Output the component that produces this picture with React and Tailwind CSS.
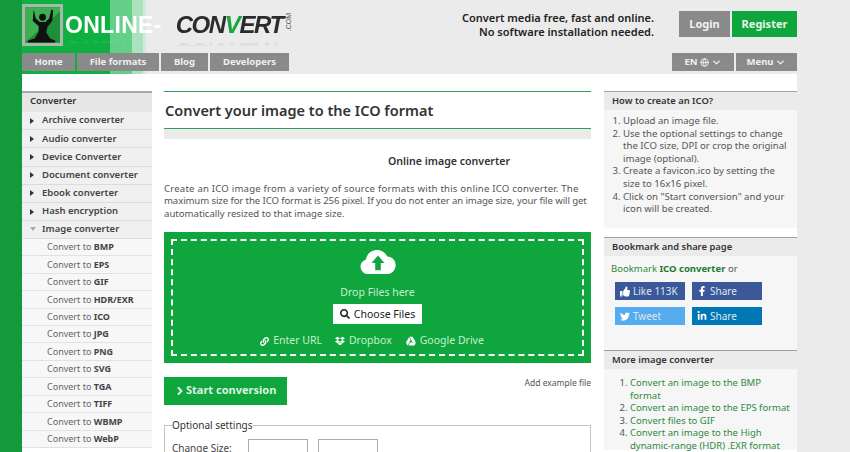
import React from 'react';
import { ChevronDown, ChevronRight, Globe } from 'lucide-react';
import { FaDropbox, FaGoogleDrive, FaFacebookF, FaTwitter, FaLinkedinIn, FaThumbsUp, FaLink, FaSearch } from 'react-icons/fa';

const topConverters = ['Archive converter', 'Audio converter', 'Device Converter', 'Document converter', 'Ebook converter', 'Hash encryption'];
const imageFormats = ['BMP', 'EPS', 'GIF', 'HDR/EXR', 'ICO', 'JPG', 'PNG', 'SVG', 'TGA', 'TIFF', 'WBMP', 'WebP'];

const NavButton = ({ children, className }) => (
  <a className={`flex h-[18px] items-center justify-center bg-[#8a8a8a] text-[9.5px] font-bold text-[#f0f0f0] ${className}`}>
    {children}
  </a>
);

const Logo = () => (
  <div className="flex h-[42px] items-center font-['Liberation_Sans',sans-serif]">
    <div className="h-[42px] w-[41px] shrink-0 border-[3px] border-[#a9b9a9]">
      <svg viewBox="0 0 36 36" className="h-full w-full">
        <path d="M0 0h36v36H0z" fill="#3fb052" />
        <path d="M0 36L36 4v32z" fill="#1f8e38" />
        <path d="M9 2l2 9 4 4h6l4-4 2-9 2 1-1 11-5 6-1 6 4 6 5 2v2H3v-2l7-2 4-7v-6l-6-5z" fill="#111" />
        <circle cx="18" cy="10" r="3.500" fill="#111" />
      </svg>
    </div>
    <span className="ml-[2px] text-[23px] font-bold tracking-[0.3px] text-white [-webkit-box-reflect:below_-10px_linear-gradient(transparent_60%,rgba(255,255,255,0.3))]">ONLINE-</span>
    <span className="ml-[14px] text-[24px] font-bold italic tracking-[-1.4px] text-[#2b2b2b] [-webkit-box-reflect:below_-10px_linear-gradient(transparent_60%,rgba(0,0,0,0.3))]">
      CON<span className="text-[#1aa53e]">V</span>ERT
    </span>
    <span className="w-[12px] -rotate-90 text-[7px] text-[#555]">.COM</span>
  </div>
);

const SideHeading = ({ children }) => (
  <div className="flex h-[21px] items-center border-t-2 border-[#a8a8a8] bg-[#e6e6e6] pb-[2px] pl-[8px] text-[9.5px] font-semibold text-[#333]">
    {children}
  </div>
);

const Box = ({ title, children, className }) => (
  <div className={`bg-[#f6f6f6] ${className}`}>
    <div className="flex h-[19px] items-center border-t border-[#a0a0a0] bg-[#ebebeb] pl-[8px] text-[9.4px] font-semibold text-[#333]">
      {title}
    </div>
    {children}
  </div>
);

const ShareButton = ({ icon, label, className }) => (
  <a className={`flex h-[18px] w-[70px] items-center gap-[3px] pl-[5px] text-[10px] text-[#dfe6f2] ${className}`}>
    <span className="flex w-[10px] justify-center text-white">{icon}</span>
    {label}
  </a>
);

export default function App() {
  return (
    <div className="relative h-[452px] w-[850px] overflow-hidden bg-[#ebebeb] font-['Noto_Sans',sans-serif]">
      {/* green band behind the header */}
      <div className="absolute left-0 top-0 h-full w-[22px] bg-[#139a3a]" />
      <div className="absolute left-[22px] top-0 flex h-[74px]">
        <div className="w-[88px] bg-[#0fb041]" />
        <div className="w-[22px] bg-[#63cf87]" />
        <div className="w-[11px] bg-[#a9e3bb]" />
        <div className="h-full w-[3px] bg-[#d3e9d9]" />
      </div>

      <div className="relative ml-[22px] w-[775px]">
        <header className="h-[74px]">
          <div className="flex h-[53px] pt-[4px]">
            <Logo />
            <div className="ml-auto mt-[6px] h-[30px] pr-[25px] text-right text-[11px] font-semibold leading-[15px] text-[#222]">
              <div>Convert media free, fast and online.</div>
              <div className="-mt-[1px]">No software installation needed.</div>
            </div>
            <div className="mt-[7px] flex gap-[2px]">
              <a className="flex h-[26px] w-[51px] items-center justify-center bg-[#8a8a8a] text-[11px] font-bold text-[#f2f2f2]">Login</a>
              <a className="flex h-[26px] w-[65px] items-center justify-center bg-[#0fa63d] text-[11px] font-bold text-[#e8f5ea]">Register</a>
            </div>
          </div>
          <nav className="flex h-[18px] gap-[2px]">
            <NavButton className="w-[53px]">Home</NavButton>
            <NavButton className="w-[82px]">File formats</NavButton>
            <NavButton className="w-[47px]">Blog</NavButton>
            <NavButton className="w-[79px]">Developers</NavButton>
            <NavButton className="ml-auto w-[62px] gap-[2px]">
              EN <Globe size={9} strokeWidth={2.5} /> <ChevronDown size={11} strokeWidth={3} />
            </NavButton>
            <NavButton className="w-[61px] gap-[2px]">
              Menu <ChevronDown size={11} strokeWidth={3} />
            </NavButton>
          </nav>
        </header>

        <div className="flex h-[378px] gap-[12px] overflow-hidden bg-white pt-[17px]">
          {/* left menu */}
          <aside className="w-[130px] shrink-0">
            <SideHeading>Converter</SideHeading>
            <ul className="bg-[#f0f0f0]">
              {topConverters.map((name) => (
                <li key={name} className="flex h-[18.2px] items-center border-b border-[#dcdcdc] text-[9.5px] font-semibold text-[#444]">
                  <span className="ml-[8px] mr-[8px] h-0 w-0 border-y-[3.5px] border-l-[4px] border-y-transparent border-l-[#333]" />
                  {name}
                </li>
              ))}
              <li className="flex h-[17.7px] items-center border-b border-[#dcdcdc] text-[9.5px] font-semibold text-[#444]">
                <span className="ml-[8px] mr-[6px] h-0 w-0 border-x-[3.5px] border-t-[4px] border-x-transparent border-t-[#aaa]" />
                Image converter
              </li>
            </ul>
            <ul className="bg-[#f7f7f7]">
              {imageFormats.map((format) => (
                <li key={format} className="flex h-[17.45px] items-center border-b border-[#e2e2e2] pl-[25px] text-[9px] text-[#666]">
                  Convert to&nbsp;<b className="text-[#444]">{format}</b>
                </li>
              ))}
            </ul>
          </aside>

          {/* main column */}
          <main className="w-[427px] shrink-0">
            <div className="flex h-[38px] items-center border-y border-[#2f9e5b] pl-[1px] pt-[1px] text-[14.5px] font-semibold text-[#333]">
              Convert your image to the ICO format
            </div>
            <div className="h-[10px] bg-[#ebebeb]" />
            <h2 className="mt-[15px] pl-[224px] text-[10.6px] font-semibold text-[#333]">Online image converter</h2>
            <p className="mt-[13px] whitespace-nowrap text-[9.6px] leading-[12.6px] text-[#555]">
              <span className="block tracking-[0.2px]">Create an ICO image from a variety of source formats with this online ICO converter. The</span>
              <span className="block tracking-[-0.1px]">maximum size for the ICO format is 256 pixel. If you do not enter an image size, your file will get</span>
              <span className="block">automatically resized to that image size.</span>
            </p>
            <div className="mt-[11px] h-[131px] bg-[#0fa63d] p-[7px]">
              <div className="flex h-full flex-col items-center border-2 border-dashed border-white pt-[8px]">
                <svg viewBox="0 0 40 28" className="h-[26px] w-[38px]">
                  <path d="M9 27a8 8 0 0 1-2-15.7C8 5 13 1 19 1c5 0 9 3 11 7 5 0 9 4 9 9.500 0 5-4 9.500-9 9.500z" fill="#fff" />
                  <path d="M20 7l7 8h-4v8h-6v-8h-4z" fill="#0fa63d" />
                </svg>
                <div className="mt-[10px] text-[10.5px] text-[#c9efd3]">Drop Files here</div>
                <a className="mt-[4px] flex h-[20px] w-[89px] items-center justify-center gap-[4px] bg-white text-[10.5px] text-[#222]">
                  <FaSearch size={10} /> Choose Files
                </a>
                <div className="mr-[11px] mt-[9px] flex items-center text-[10.5px] text-[#c9efd3]">
                  <FaLink size={9} className="text-white" /><span className="ml-[4px]">Enter URL</span>
                  <FaDropbox size={10} className="ml-[13px] text-white" /><span className="ml-[4px]">Dropbox</span>
                  <FaGoogleDrive size={10} className="ml-[14px] text-white" /><span className="ml-[4px]">Google Drive</span>
                </div>
              </div>
            </div>
            <div className="mt-[14px] flex items-start justify-between">
              <a className="flex h-[28px] w-[123px] items-center bg-[#0fa63d] pl-[10px] text-[11px] font-bold text-[#dff3e4]">
                <ChevronRight size={12} strokeWidth={4} /> Start conversion
              </a>
              <span className="text-[8.5px] text-[#555]">Add example file</span>
            </div>
            <fieldset className="mt-[13px] border border-[#c4c4c4] px-[7px] pb-[40px]">
              <legend className="text-[10px] text-[#333]">Optional settings</legend>
              <div className="mt-[6px] flex items-center text-[10px] text-[#444]">
                <span className="w-[76px]">Change Size:</span>
                <span className="h-[20px] w-[60px] border border-[#aaa]" />
                <span className="ml-[10px] h-[20px] w-[60px] border border-[#aaa]" />
              </div>
            </fieldset>
          </main>

          {/* right column */}
          <aside className="ml-[1px] w-[193px] shrink-0">
            <Box title="How to create an ICO?" className="h-[137px]">
              <ol className="mt-[5px] list-decimal whitespace-nowrap pl-[19px] text-[9.6px] leading-[12.6px] text-[#555]">
                <li>Upload an image file.</li>
                <li>Use the optional settings to change<br />the ICO size, DPI or crop the original<br />image (optional).</li>
                <li>Create a favicon.ico by setting the<br />size to 16x16 pixel.</li>
                <li>Click on "Start conversion" and your<br />icon will be created.</li>
              </ol>
            </Box>
            <Box title="Bookmark and share page" className="mt-[9px] h-[113px]">
              <p className="mt-[6px] pl-[7px] text-[9.5px] text-[#2f8a3d]">
                Bookmark <b className="text-[#1c7a2e]">ICO converter</b> <span className="text-[#555]">or</span>
              </p>
              <div className="ml-[11px] mt-[6px] grid w-[147px] grid-cols-2 gap-x-[7px] gap-y-[7px]">
                <ShareButton icon={<FaThumbsUp size={11} />} label="Like 113K" className="bg-[#3b5998]" />
                <ShareButton icon={<FaFacebookF size={10} />} label="Share" className="bg-[#3b5998]" />
                <ShareButton icon={<FaTwitter size={11} />} label="Tweet" className="bg-[#55acee]" />
                <ShareButton icon={<FaLinkedinIn size={10} />} label="Share" className="bg-[#0077b5]" />
              </div>
            </Box>
            <Box title="More image converter" className="h-[100px]">
              <ol className="mt-[8px] list-decimal pl-[26px] pr-[5px] text-[9.5px] leading-[12.6px] text-[#2f8a3d] marker:text-[#555]">
                <li>Convert an image to the BMP<br />format</li>
                <li>Convert an image to the EPS format</li>
                <li>Convert files to GIF</li>
                <li>Convert an image to the High<br />dynamic-range (HDR) .EXR format</li>
              </ol>
            </Box>
          </aside>
        </div>
      </div>
    </div>
  );
}
